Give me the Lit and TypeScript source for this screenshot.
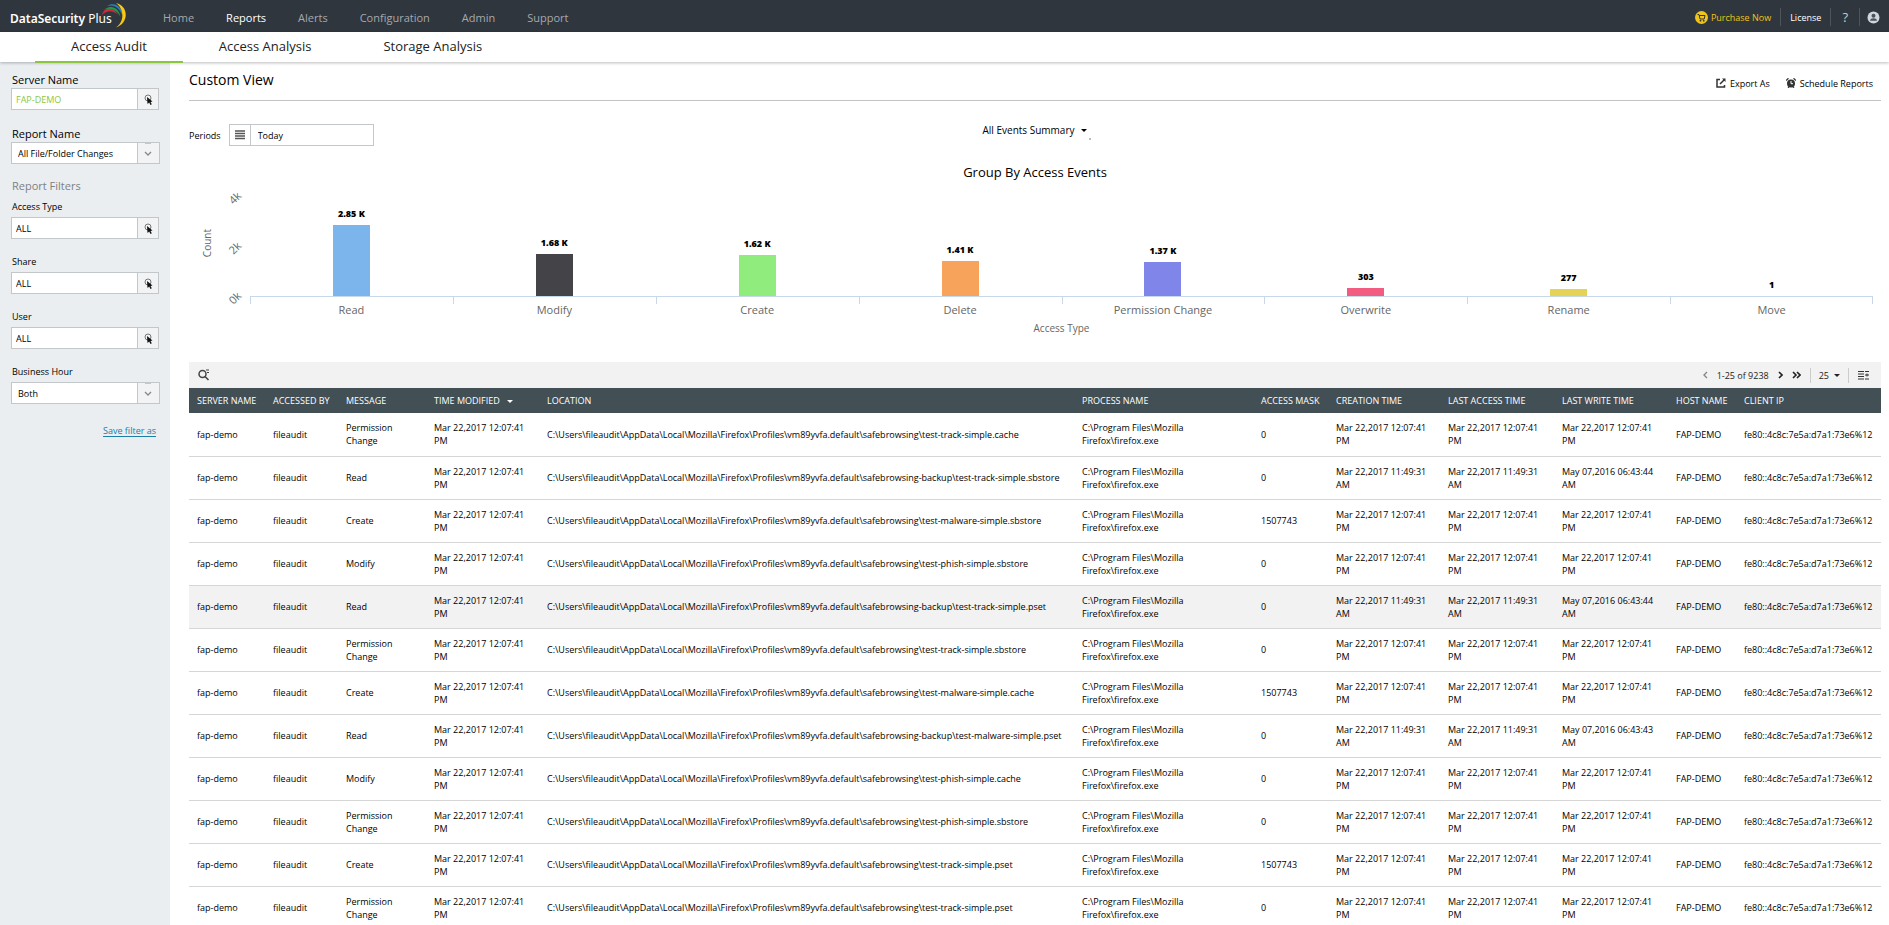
import { LitElement, html, css } from "lit";
import { customElement, state } from "lit/decorators.js";
import { classMap } from "lit/directives/class-map.js";

type Row = { message: string; location: string; mask: string; created: string; accessed: string; written: string };

const PROFILE = "C:\\Users\\fileaudit\\AppData\\Local\\Mozilla\\Firefox\\Profiles\\vm89yvfa.default\\";
const NOON = "Mar 22,2017 12:07:41 PM";
const MORNING = "Mar 22,2017 11:49:31 AM";

const row = (message: string, file: string, mask = "0", created = NOON, accessed = NOON, written = NOON): Row => ({
  message, location: PROFILE + file, mask, created, accessed, written,
});

const ROWS: Row[] = [
  row("Permission Change", "safebrowsing\\test-track-simple.cache"),
  row("Read", "safebrowsing-backup\\test-track-simple.sbstore", "0", MORNING, MORNING, "May 07,2016 06:43:44 AM"),
  row("Create", "safebrowsing\\test-malware-simple.sbstore", "1507743"),
  row("Modify", "safebrowsing\\test-phish-simple.sbstore"),
  row("Read", "safebrowsing-backup\\test-track-simple.pset", "0", MORNING, MORNING, "May 07,2016 06:43:44 AM"),
  row("Permission Change", "safebrowsing\\test-track-simple.sbstore"),
  row("Create", "safebrowsing\\test-malware-simple.cache", "1507743"),
  row("Read", "safebrowsing-backup\\test-malware-simple.pset", "0", MORNING, MORNING, "May 07,2016 06:43:43 AM"),
  row("Modify", "safebrowsing\\test-phish-simple.cache"),
  row("Permission Change", "safebrowsing\\test-phish-simple.sbstore"),
  row("Create", "safebrowsing\\test-track-simple.pset", "1507743"),
  row("Permission Change", "safebrowsing\\test-track-simple.pset"),
];

const BARS = [
  { name: "Read", value: 2850, label: "2.85 K", color: "#7cb5ec" },
  { name: "Modify", value: 1680, label: "1.68 K", color: "#434348" },
  { name: "Create", value: 1620, label: "1.62 K", color: "#90ed7d" },
  { name: "Delete", value: 1410, label: "1.41 K", color: "#f7a35c" },
  { name: "Permission Change", value: 1370, label: "1.37 K", color: "#8085e9" },
  { name: "Overwrite", value: 303, label: "303", color: "#f15c80" },
  { name: "Rename", value: 277, label: "277", color: "#e4d354" },
  { name: "Move", value: 1, label: "1", color: "#2b908f" },
];

const COLUMNS = [
  { key: "server", title: "SERVER NAME" },
  { key: "by", title: "ACCESSED BY" },
  { key: "message", title: "MESSAGE" },
  { key: "modified", title: "TIME MODIFIED", sorted: true },
  { key: "location", title: "LOCATION" },
  { key: "process", title: "PROCESS NAME" },
  { key: "mask", title: "ACCESS MASK" },
  { key: "created", title: "CREATION TIME" },
  { key: "accessed", title: "LAST ACCESS TIME" },
  { key: "written", title: "LAST WRITE TIME" },
  { key: "host", title: "HOST NAME" },
  { key: "ip", title: "CLIENT IP" },
];

const caret = html`<svg width="6" height="3" viewBox="0 0 6 3" aria-hidden="true"><path d="M0 0h6L3 3z" fill="currentColor"/></svg>`;

const shared = css`
  * { box-sizing: border-box; }
  button, input, select { font: inherit; color: inherit; border: 0; margin: 0; padding: 0; border-radius: 0; background: none; }
  button, select { cursor: pointer; text-align: left; }
  a { color: inherit; text-decoration: none; }
  svg { display: block; flex: none; }
`;

@customElement("dsp-header")
export class DspHeader extends LitElement {
  static styles = [shared, css`
    :host { display: block; position: relative; }
    .bar { display: flex; align-items: center; height: 32px; padding: 0 9px 0 10px; background: #2f363e; color: #a5a9ad; font-size: 11px; }
    .brand { display: flex; width: 128px; height: 32px; color: #fff; font: 600 12px/38px "Noto Sans", "Open Sans", sans-serif; white-space: nowrap; }
    .brand svg { margin: 3px 0 0 -10px; }
    .brand .plus { font-weight: 400; }
    .menu { display: flex; gap: 32px; margin-left: 25px; padding-top: 4px; }
    .menu a { line-height: 20px; }
    .menu .on { color: #fff; font-weight: 500; }
    .tools { display: flex; margin-left: auto; padding-top: 2px; font-size: 9px; font-weight: 500; color: #fff; }
    .tools > * { display: flex; align-items: center; height: 18px; border-left: 1px solid #4d545b; }
    .tools .buy { border: 0; color: #f0c419; gap: 3px; padding-right: 9px; }
    .tools .license { padding: 0 9px; }
    .tools .help { padding: 0 11px; color: #c9cdd1; font-size: 13px; }
    .tools .user { padding-left: 7px; }
    .tabs { display: flex; height: 30px; padding-left: 35px; background: #fff; box-shadow: 0 1px 3px #0004; position: relative; color: #222; font-size: 13px; line-height: 29px; }
    .tabs a { height: 31px; padding: 0 36px; white-space: nowrap; }
    .tabs .on { border-bottom: 2px solid #8cc63f; }
  `];
  render() {
    return html`
      <header class="bar">
        <a class="brand" href="#"><span>DataSecurity <span class="plus">Plus</span></span>
          <svg width="24" height="25" viewBox="0 0 24 25" fill="none" aria-hidden="true">
            <path d="M0 12C2 4 11 3 16 12C11 7 5 7 0 12z" fill="#d7263d"/>
            <path d="M2 7C8 1 17 4 18.500 14C15 7 8 4 2 7z" fill="#1e9e4a"/>
            <path d="M5 3C12-2 21 4 20.500 13C18 5 12 1 5 3z" fill="#2a7fc9"/>
            <path d="M14 0C27 3 27 20 14 24.500C23 18 22 6 14 0z" fill="#f7c815"/>
          </svg>
        </a>
        <nav class="menu">
          <a href="#">Home</a><a class="on" href="#">Reports</a><a href="#">Alerts</a>
          <a href="#">Configuration</a><a href="#">Admin</a><a href="#">Support</a>
        </nav>
        <div class="tools">
          <a class="buy" href="#">
            <svg width="13" height="13" viewBox="0 0 13 13" aria-hidden="true"><circle cx="6.500" cy="6.500" r="6.500" fill="#f0c419"/><path d="M2.500 3.500h1.500l1 4.500h4.200l.8-3.500H4.300" fill="none" stroke="#2f363e"/><circle cx="5.500" cy="9.700" r=".9" fill="#2f363e"/><circle cx="8.700" cy="9.700" r=".9" fill="#2f363e"/></svg>
            Purchase Now</a>
          <a class="license" href="#">License</a>
          <a class="help" href="#">?</a>
          <button class="user" aria-label="Account">
            <svg width="13" height="13" viewBox="0 0 13 13" aria-hidden="true"><circle cx="6.500" cy="6.500" r="6" fill="#cfd6dc"/><circle cx="6.500" cy="4.700" r="2" fill="#4a525a"/><path d="M3 9.800C3 6.500 10 6.500 10 9.800z" fill="#4a525a"/></svg>
          </button>
        </div>
      </header>
      <nav class="tabs">
        <a class="on" href="#">Access Audit</a><a href="#">Access Analysis</a><a href="#">Storage Analysis</a>
      </nav>`;
  }
}

@customElement("dsp-filters")
export class DspFilters extends LitElement {
  static styles = [shared, css`
    :host { display: block; background: #eaeef0; padding: 9px 10px 9px 11px; font-size: 9px; color: #000; }
    .field { margin-bottom: 15px; }
    label { display: block; line-height: 16px; margin-bottom: 2px; padding-left: 1px; }
    .strong label { font-size: 11px; font-weight: 500; line-height: 17px; margin-bottom: 0; }
    .box { display: flex; width: 148px; height: 22px; border: 1px solid #c4c7c9; background: #fff; }
    .box input { flex: 1; min-width: 0; padding-left: 4px; outline: none; }
    .green { color: #8cc63f; }
    .pick { display: grid; place-items: center; width: 21px; border-left: 1px solid #c4c7c9; background: #f1f3f5; }
    .drop { position: relative; width: 149px; }
    .drop select { width: 100%; padding-left: 6px; appearance: none; outline: none; background: linear-gradient(#c4c7c9, #c4c7c9) right 21px top / 1px 100% no-repeat, linear-gradient(#c4c7c9, #c4c7c9) right 8px top / 6px 1px no-repeat, linear-gradient(#f1f3f5, #f1f3f5) right / 21px 100% no-repeat; }
    .drop svg { position: absolute; right: 7px; top: 8px; pointer-events: none; }
    h2 { margin: 0 0 6px; padding-left: 1px; font-size: 11px; font-weight: 400; line-height: 14px; color: #7d8184; }
    .save { display: block; width: 145px; margin-top: 19px; text-align: right; text-decoration: underline; text-underline-offset: 2px; color: #1b7ea6; line-height: 16px; }
  `];
  private picker(id: string, label: string, value: string, strong = false) {
    return html`<div class=${classMap({ field: true, strong })}>
      <label for=${id}>${label}</label>
      <div class="box"><input id=${id} class=${strong ? "green" : ""} .value=${value}>
        <button class="pick" aria-label="Choose ${label}"><svg width="9" height="11" viewBox="0 0 9 11" aria-hidden="true"><circle cx="4" cy="4" r="3" fill="none" stroke="#777"/><path d="M3 3l5.500 4.500-2 .4 1.300 2.300-1.300.7-1.300-2.400L3.500 10z" fill="#111"/></svg></button>
      </div></div>`;
  }
  private dropdown(id: string, label: string, value: string, strong = false) {
    return html`<div class=${classMap({ field: true, strong })}>
      <label for=${id}>${label}</label>
      <div class="box drop"><select id=${id}><option>${value}</option></select>
        <svg width="8" height="6" viewBox="0 0 8 6" fill="none" stroke="#888" stroke-width="1.300" aria-hidden="true"><path d="M1 1l3 3 3-3"/></svg>
      </div></div>`;
  }
  render() {
    return html`
      ${this.picker("server", "Server Name", "FAP-DEMO", true)}
      ${this.dropdown("report", "Report Name", "All File/Folder Changes", true)}
      <h2>Report Filters</h2>
      ${this.picker("type", "Access Type", "ALL")}
      ${this.picker("share", "Share", "ALL")}
      ${this.picker("user", "User", "ALL")}
      ${this.dropdown("hour", "Business Hour", "Both")}
      <a class="save" href="#">Save filter as</a>`;
  }
}

@customElement("dsp-chart")
export class DspChart extends LitElement {
  static styles = [shared, css`
    :host { display: block; color: #666; font-size: 11px; }
    h3 { margin: 0; text-align: center; font-size: 13px; font-weight: 400; line-height: 20px; color: #000; }
    .frame { display: grid; grid-template: 108px auto auto / 36px 25px 1fr; margin-top: 7px; padding-right: 8px; }
    .title { writing-mode: vertical-rl; transform: rotate(180deg); align-self: center; justify-self: center; line-height: 14px; font-size: 10px; }
    .scale { grid-row: 1 / 3; grid-column: 2; align-self: start; display: flex; flex-direction: column; justify-content: space-between; height: 116px; padding-top: 2px; }
    .scale span { line-height: 14px; width: 20px; text-align: center; transform: rotate(-45deg); }
    .plot { grid-column: 3; display: flex; border-bottom: 1px solid #c9d7ea; }
    .slot { flex: 1; display: flex; flex-direction: column; justify-content: flex-end; align-items: center; }
    .slot b { font-size: 9px; font-weight: 800; line-height: 12px; margin-bottom: 5px; color: #000; }
    .bar { width: 37px; }
    .names { grid-column: 3; display: flex; }
    .name { flex: 1; text-align: center; line-height: 15px; padding-top: 5px; background: linear-gradient(#c9d7ea, #c9d7ea) left top / 1px 7px no-repeat; }
    .name:last-child { background: linear-gradient(#c9d7ea, #c9d7ea) left top / 1px 7px no-repeat, linear-gradient(#c9d7ea, #c9d7ea) right top / 1px 7px no-repeat; }
    .axis { grid-column: 3; text-align: center; font-size: 10px; line-height: 14px; margin-top: 4px; }
  `];
  render() {
    return html`
      <h3>Group By Access Events</h3>
      <div class="frame">
        <span class="title">Count</span>
        <div class="scale"><span>4k</span><span>2k</span><span>0k</span></div>
        <div class="plot">${BARS.map((b) => html`<div class="slot"><b>${b.label}</b><div class="bar" style="height:${Math.round(b.value / 40)}px;background:${b.color}"></div></div>`)}</div>
        <div class="names">${BARS.map((b) => html`<div class="name">${b.name}</div>`)}</div>
        <div class="axis">Access Type</div>
      </div>`;
  }
}

@customElement("dsp-events")
export class DspEvents extends LitElement {
  @state() private selected = 4;
  static styles = [shared, css`
    :host { display: block; font-size: 9px; }
    .toolbar { display: flex; align-items: center; height: 26px; padding: 0 12px 0 9px; background: #f2f2f2; color: #222; }
    .pager { display: flex; align-items: center; margin-left: auto; }
    .pager > * { margin-left: 9px; }
    .pager .size { display: flex; align-items: center; gap: 5px; height: 15px; padding: 0 8px; border: solid #ccc; border-width: 0 1px; }
    table { width: 100%; border-collapse: collapse; table-layout: fixed; }
    th { height: 25px; padding: 0 0 0 8px; background: #424f55; color: #fff; font-weight: 500; text-align: left; white-space: nowrap; }
    th svg { display: inline-block; margin-left: 7px; vertical-align: middle; }
    td { height: 43px; padding: 4px 8px; line-height: 13px; border-bottom: 1px solid #d6d6d6; color: #000; }
    .location, .ip { white-space: nowrap; padding-right: 0; }
    .selected td { background: #f2f2f2; }
    col.server { width: 76px; } col.by { width: 73px; } col.message { width: 88px; } col.modified { width: 113px; }
    col.process { width: 179px; } col.mask { width: 75px; } col.created { width: 112px; }
    col.accessed { width: 114px; } col.written { width: 114px; } col.host { width: 68px; } col.ip { width: 145px; }
    .message { padding-right: 20px; } .process { padding-right: 60px; }
  `];
  render() {
    return html`
      <div class="toolbar">
        <button aria-label="Search"><svg width="12" height="12" viewBox="0 0 12 12" fill="none" stroke="#444" aria-hidden="true"><circle cx="4.500" cy="5" r="3.500" stroke-width="1.500"/><path d="M7 7.500l3.500 3.500" stroke-width="1.600"/><path d="M8 1h3M9 3.500h2"/></svg></button>
        <div class="pager">
          <button aria-label="Previous page"><svg width="5" height="8" viewBox="0 0 5 8" fill="none" stroke="#888" stroke-width="1.400"><path d="M4 1L1 4l3 3"/></svg></button>
          <span>1-25 of 9238</span>
          <button aria-label="Next page"><svg width="5" height="8" viewBox="0 0 5 8" fill="none" stroke="#222" stroke-width="1.600"><path d="M1 1l3 3-3 3"/></svg></button>
          <button aria-label="Last page"><svg width="9" height="8" viewBox="0 0 9 8" fill="none" stroke="#222" stroke-width="1.600"><path d="M1 1l3 3-3 3M5 1l3 3-3 3"/></svg></button>
          <button class="size">25 ${caret}</button>
          <button aria-label="Columns"><svg width="11" height="9" viewBox="0 0 11 9" stroke="#333" aria-hidden="true"><path d="M0 .5h6M0 3h6M0 5.500h6M0 8h6M7 .5h4M7 4h4M7 8h4M9 2.500v3"/></svg></button>
        </div>
      </div>
      <table>
        <colgroup>${COLUMNS.map((c) => html`<col class=${c.key}>`)}</colgroup>
        <thead><tr>${COLUMNS.map((c) => html`<th scope="col">${c.title}${c.sorted ? caret : ""}</th>`)}</tr></thead>
        <tbody>${ROWS.map((r, i) => html`
          <tr class=${classMap({ selected: i === this.selected })} @click=${() => (this.selected = i)}>
            <td>fap-demo</td><td>fileaudit</td><td class="message">${r.message}</td><td>${NOON}</td>
            <td class="location">${r.location}</td><td class="process">C:\\Program Files\\Mozilla Firefox\\firefox.exe</td>
            <td>${r.mask}</td><td>${r.created}</td><td>${r.accessed}</td><td>${r.written}</td>
            <td>FAP-DEMO</td><td class="ip">fe80::4c8c:7e5a:d7a1:73e6%12</td>
          </tr>`)}</tbody>
      </table>`;
  }
}

@customElement("app-root")
export class AppRoot extends LitElement {
  static styles = [shared, css`
    :host { display: flex; flex-direction: column; height: 100vh; overflow: hidden; background: #fff; color: #000; font-family: "Open Sans", "Noto Sans", sans-serif; }
    .page { flex: 1; min-height: 0; display: grid; grid-template-columns: 170px minmax(0, 1fr); }
    main { padding: 0 8px 0 19px; overflow: hidden; }
    .head { display: flex; align-items: center; height: 39px; border-bottom: 1px solid #c4c4c4; font-size: 9px; }
    h1 { margin: 0 auto 0 0; padding-bottom: 2px; font-size: 14px; font-weight: 400; line-height: 34px; }
    .head button { display: flex; align-items: center; gap: 4px; margin-right: 8px; margin-left: 8px; padding-top: 4px; }
    .controls { display: grid; grid-template-columns: 1fr auto 1fr; align-items: start; height: 61px; padding-top: 21px; }
    .period { display: flex; align-items: center; gap: 8px; margin-top: 2px; font-size: 9px; }
    .date { display: flex; align-items: center; width: 145px; height: 22px; border: 1px solid #c4c7c9; }
    .date svg { margin: 0 5px; }
    .date input { height: 20px; width: 120px; padding-left: 7px; border-left: 1px solid #c4c7c9; outline: none; }
    .summary { position: relative; display: flex; align-items: center; gap: 7px; font-size: 10px; font-weight: 500; line-height: 16px; }
    .summary::after { content: ""; position: absolute; right: -4px; bottom: -2px; width: 2px; height: 2px; background: #bbb; }
    dsp-events { margin-top: 27px; }
  `];
  render() {
    return html`
      <dsp-header></dsp-header>
      <div class="page">
        <dsp-filters></dsp-filters>
        <main>
          <div class="head">
            <h1>Custom View</h1>
            <button><svg width="10" height="10" viewBox="0 0 10 10" fill="none" stroke="#333" stroke-width="1.500" aria-hidden="true"><path d="M4 1.500H1v7.500h7.500V7M4 6l4.500-4.500"/><path d="M6 .5h3.500V4z" fill="#333" stroke="none"/></svg>Export As</button>
            <button><svg width="10" height="10" viewBox="0 0 10 10" aria-hidden="true"><circle cx="5" cy="5.500" r="4" fill="#333"/><path d="M0 2.500L2.500.3M10 2.500L7.500.3M2 9.700l1-1M8 9.700l-1-1" stroke="#333" stroke-width="1.300"/><path d="M5 3v2.700h2" stroke="#fff" fill="none"/></svg>Schedule Reports</button>
          </div>
          <div class="controls">
            <div class="period"><label for="period">Periods</label>
              <div class="date"><svg width="10" height="10" viewBox="0 0 10 10" stroke="#555" stroke-width="1.500" aria-hidden="true"><path d="M0 1h10M0 3.500h10M0 6h10M0 8.500h10"/></svg><input id="period" .value=${"Today"}></div>
            </div>
            <button class="summary">All Events Summary ${caret}</button>
          </div>
          <dsp-chart></dsp-chart>
          <dsp-events></dsp-events>
        </main>
      </div>`;
  }
}
